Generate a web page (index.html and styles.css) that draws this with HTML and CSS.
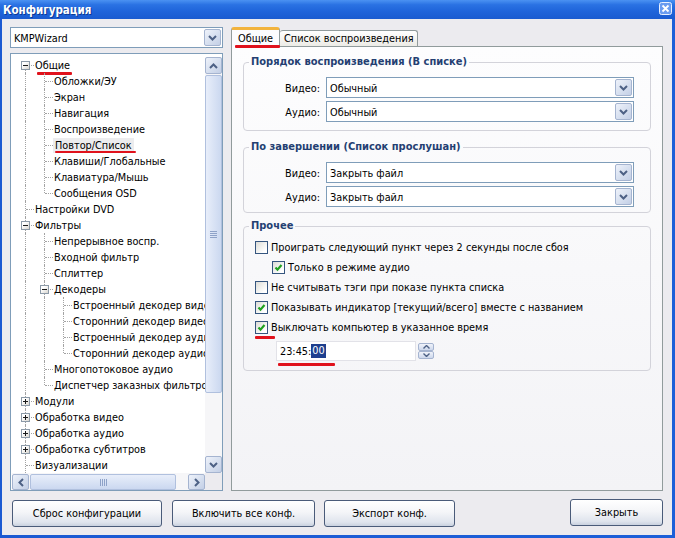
FILE: index.html
```html
<!DOCTYPE html>
<html lang="ru">
<head>
<meta charset="utf-8">
<title>Конфигурация</title>
<link rel="stylesheet" href="styles.css">
</head>
<body>
<div class="window">
  <div class="titlebar">
    <span class="title">Конфигурация</span>
    <span class="close"><svg width="13" height="13" viewBox="0 0 13 13"><rect x="0.5" y="0.5" width="12" height="12" rx="2" fill="#6a9cf0" stroke="#e8f0ff"/><path d="M3.5 3.5l6 6M9.5 3.5l-6 6" stroke="#fff" stroke-width="1.8"/></svg></span>
  </div>
  <div class="client">
    <div class="main">
      <div class="left">
        <div class="combo">
          <span class="val">KMPWizard</span>
          <span class="drop"><svg width="9" height="6" viewBox="0 0 9 6"><path d="M1 1l3.5 3.5L8 1" fill="none" stroke="#4d6185" stroke-width="2"/></svg></span>
        </div>
        <div class="tree">
          <div class="tree-body">
            <div class="row"><i class="cell c f"><b class="exp"></b></i><span class="t mark m-root">Общие</span></div>
            <div class="row"><i class="cell g"></i><i class="cell c"></i><span class="t">Обложки/ЭУ</span></div>
            <div class="row"><i class="cell g"></i><i class="cell c"></i><span class="t">Экран</span></div>
            <div class="row"><i class="cell g"></i><i class="cell c"></i><span class="t">Навигация</span></div>
            <div class="row"><i class="cell g"></i><i class="cell c"></i><span class="t">Воспроизведение</span></div>
            <div class="row"><i class="cell g"></i><i class="cell c"></i><span class="t sel mark m-sel">Повтор/Список</span></div>
            <div class="row"><i class="cell g"></i><i class="cell c"></i><span class="t">Клавиши/Глобальные</span></div>
            <div class="row"><i class="cell g"></i><i class="cell c"></i><span class="t">Клавиатура/Мышь</span></div>
            <div class="row"><i class="cell g"></i><i class="cell c l"></i><span class="t">Сообщения OSD</span></div>
            <div class="row"><i class="cell c"></i><span class="t">Настройки DVD</span></div>
            <div class="row"><i class="cell c"><b class="exp"></b></i><span class="t">Фильтры</span></div>
            <div class="row"><i class="cell g"></i><i class="cell c"></i><span class="t">Непрерывное воспр.</span></div>
            <div class="row"><i class="cell g"></i><i class="cell c"></i><span class="t">Входной фильтр</span></div>
            <div class="row"><i class="cell g"></i><i class="cell c"></i><span class="t">Сплиттер</span></div>
            <div class="row"><i class="cell g"></i><i class="cell c"><b class="exp"></b></i><span class="t">Декодеры</span></div>
            <div class="row"><i class="cell g"></i><i class="cell g"></i><i class="cell c"></i><span class="t">Встроенный декодер видео</span></div>
            <div class="row"><i class="cell g"></i><i class="cell g"></i><i class="cell c"></i><span class="t">Сторонний декодер видео</span></div>
            <div class="row"><i class="cell g"></i><i class="cell g"></i><i class="cell c"></i><span class="t">Встроенный декодер аудио</span></div>
            <div class="row"><i class="cell g"></i><i class="cell g"></i><i class="cell c l"></i><span class="t">Сторонний декодер аудио</span></div>
            <div class="row"><i class="cell g"></i><i class="cell c"></i><span class="t">Многопотоковое аудио</span></div>
            <div class="row"><i class="cell g"></i><i class="cell c l"></i><span class="t">Диспетчер заказных фильтров</span></div>
            <div class="row"><i class="cell c"><b class="exp plus"></b></i><span class="t">Модули</span></div>
            <div class="row"><i class="cell c"><b class="exp plus"></b></i><span class="t">Обработка видео</span></div>
            <div class="row"><i class="cell c"><b class="exp plus"></b></i><span class="t">Обработка аудио</span></div>
            <div class="row"><i class="cell c"><b class="exp plus"></b></i><span class="t">Обработка субтитров</span></div>
            <div class="row"><i class="cell c"></i><span class="t">Визуализации</span></div>
          </div>
          <div class="vscroll">
            <span class="sbtn"><svg width="9" height="6" viewBox="0 0 9 6"><path d="M1 5l3.5-3.5L8 5" fill="none" stroke="#4d6185" stroke-width="2"/></svg></span>
            <span class="vthumb"><span class="grip-h"></span></span>
            <span class="vtrack"></span>
            <span class="sbtn"><svg width="9" height="6" viewBox="0 0 9 6"><path d="M1 1l3.5 3.5L8 1" fill="none" stroke="#4d6185" stroke-width="2"/></svg></span>
          </div>
          <div class="hscroll">
            <span class="sbtn"><svg width="6" height="9" viewBox="0 0 6 9"><path d="M5 1L1.5 4.5 5 8" fill="none" stroke="#4d6185" stroke-width="2"/></svg></span>
            <span class="hthumb"><span class="grip-v"></span></span>
            <span class="htrack"></span>
            <span class="sbtn"><svg width="6" height="9" viewBox="0 0 6 9"><path d="M1 1l3.5 3.5L1 8" fill="none" stroke="#4d6185" stroke-width="2"/></svg></span>
          </div>
          <div class="corner"></div>
        </div>
      </div>
      <div class="right">
        <div class="tabs">
          <span class="tab active"><span class="mark m-tab">Общие</span></span>
          <span class="tab">Список воспроизведения</span>
        </div>
        <div class="page">
          <fieldset class="grp g1">
            <legend>Порядок воспроизведения (В списке)</legend>
            <div class="frow"><span class="lbl">Видео:</span>
              <div class="combo wide"><span class="val">Обычный</span><span class="drop"><svg width="9" height="6" viewBox="0 0 9 6"><path d="M1 1l3.5 3.5L8 1" fill="none" stroke="#4d6185" stroke-width="2"/></svg></span></div>
            </div>
            <div class="frow"><span class="lbl">Аудио:</span>
              <div class="combo wide"><span class="val">Обычный</span><span class="drop"><svg width="9" height="6" viewBox="0 0 9 6"><path d="M1 1l3.5 3.5L8 1" fill="none" stroke="#4d6185" stroke-width="2"/></svg></span></div>
            </div>
          </fieldset>
          <fieldset class="grp g2">
            <legend>По завершении (Список прослушан)</legend>
            <div class="frow"><span class="lbl">Видео:</span>
              <div class="combo wide"><span class="val">Закрыть файл</span><span class="drop"><svg width="9" height="6" viewBox="0 0 9 6"><path d="M1 1l3.5 3.5L8 1" fill="none" stroke="#4d6185" stroke-width="2"/></svg></span></div>
            </div>
            <div class="frow"><span class="lbl">Аудио:</span>
              <div class="combo wide"><span class="val">Закрыть файл</span><span class="drop"><svg width="9" height="6" viewBox="0 0 9 6"><path d="M1 1l3.5 3.5L8 1" fill="none" stroke="#4d6185" stroke-width="2"/></svg></span></div>
            </div>
          </fieldset>
          <fieldset class="grp g3">
            <legend>Прочее</legend>
            <div class="opts">
              <div class="chk"><span class="box"></span><span>Проиграть следующий пункт через 2 секунды после сбоя</span></div>
              <div class="chk sub"><span class="box on"><svg width="11" height="11" viewBox="0 0 11 11"><path d="M2.5 5.5l2 2.2 4-4.7" fill="none" stroke="#21a121" stroke-width="2.2"/></svg></span><span>Только в режиме аудио</span></div>
              <div class="chk"><span class="box"></span><span>Не считывать тэги при показе пункта списка</span></div>
              <div class="chk"><span class="box on"><svg width="11" height="11" viewBox="0 0 11 11"><path d="M2.5 5.5l2 2.2 4-4.7" fill="none" stroke="#21a121" stroke-width="2.2"/></svg></span><span>Показывать индикатор [текущий/всего] вместе с названием</span></div>
              <div class="chk"><span class="box on mark m-box"><svg width="11" height="11" viewBox="0 0 11 11"><path d="M2.5 5.5l2 2.2 4-4.7" fill="none" stroke="#21a121" stroke-width="2.2"/></svg></span><span>Выключать компьютер в указанное время</span></div>
              <div class="timerow">
                <div class="time mark m-time"><span>23:45:</span><span class="hl">00</span></div>
                <div class="spin">
                  <span class="sp"><svg width="7" height="4" viewBox="0 0 7 4"><path d="M0.5 3.5l3-3 3 3" fill="none" stroke="#4d6185" stroke-width="1.4"/></svg></span>
                  <span class="sp"><svg width="7" height="4" viewBox="0 0 7 4"><path d="M0.5 0.5l3 3 3-3" fill="none" stroke="#4d6185" stroke-width="1.4"/></svg></span>
                </div>
              </div>
            </div>
          </fieldset>
        </div>
      </div>
    </div>
    <div class="buttons">
      <span class="btn b1">Сброс конфигурации</span>
      <span class="btn b2">Включить все конф.</span>
      <span class="btn b3">Экспорт конф.</span>
      <span class="btn b4">Закрыть</span>
    </div>
  </div>
</div>
</body>
</html>
```

FILE: styles.css
```css
* { box-sizing: border-box; }
html, body { margin: 0; padding: 0; }
body {
  width: 675px;
  height: 538px;
  overflow: hidden;
  font-family: "DejaVu Sans Condensed", "DejaVu Sans", Verdana, sans-serif;
  font-size: 10.8px;
  color: #000;
  background: #1a58cf;
}
.window {
  width: 675px;
  height: 538px;
  display: flex;
  flex-direction: column;
  background: linear-gradient(90deg, #1b59d2, #1d5fd8);
}
.titlebar {
  height: 19px;
  flex: none;
  display: flex;
  align-items: center;
  justify-content: space-between;
  padding: 0 3px 0 3px;
  background: linear-gradient(#4b92f2 0%, #2a72e3 25%, #1f64da 60%, #1a5bd0 100%);
}
.title {
  color: #fff;
  font-family: "DejaVu Sans Condensed", "DejaVu Sans", sans-serif;
  font-weight: bold;
  font-size: 11.5px;
  text-shadow: 1px 1px 0 #0c3a94;
}
.close { display: flex; margin-top: -2px; }
.client {
  flex: 1;
  margin: 0 3px 3px 2px;
  background: #ecebef;
  display: flex;
  flex-direction: column;
  gap: 8px;
  padding: 8px 9px 8px 8px;
}
.main { flex: 1; display: flex; gap: 8px; min-height: 0; }
.left { width: 213px; flex: none; display: flex; flex-direction: column; gap: 5px; }
.right { flex: 1; display: flex; flex-direction: column; }

/* combo box */
.combo {
  height: 21px;
  flex: none;
  display: flex;
  align-items: center;
  border: 1px solid #7f9db9;
  background: #fff;
  padding: 1px;
}
.combo .val { flex: 1; padding-left: 2px; padding-top: 1px; white-space: nowrap; }
.drop, .sbtn {
  width: 17px;
  height: 17px;
  flex: none;
  display: flex;
  align-items: center;
  justify-content: center;
  border: 1px solid #a5b4d0;
  border-radius: 2px;
  background: linear-gradient(135deg, #eef2fa 0%, #d6dfef 55%, #c3cfe6 100%);
}

/* tree */
.tree {
  flex: 1;
  border: 1px solid #7f9db9;
  background: #fff;
  padding: 3px 0 0 1px;
  display: grid;
  grid-template-columns: 1fr 17px;
  grid-template-rows: 1fr 17px;
  min-height: 0;
}
.tree-body { overflow: hidden; background: #fff; min-height: 0; }
.row {
  height: 16px;
  display: flex;
  align-items: flex-start;
  padding-left: 4px;
  white-space: nowrap;
  line-height: 16px;
}
.cell { width: 19px; height: 16px; flex: none; position: relative; display: block; }
.cell.g::before, .cell.c::before {
  content: "";
  position: absolute;
  left: 9px;
  top: 0;
  bottom: 0;
  border-left: 1px dotted #a3a3a3;
}
.cell.c::after {
  content: "";
  position: absolute;
  left: 10px;
  right: 1px;
  top: 8px;
  border-top: 1px dotted #a3a3a3;
}
.cell.l::before { bottom: 8px; }
.cell.f::before { top: 8px; }
.exp {
  position: absolute;
  left: 5px;
  top: 4px;
  width: 9px;
  height: 9px;
  border: 1px solid #8c9aa8;
  background: linear-gradient(135deg, #ffffff 30%, #d9d6cf);
  z-index: 1;
}
.exp::before {
  content: "";
  position: absolute;
  left: 1px;
  top: 3px;
  width: 5px;
  height: 1px;
  background: #1a1a1a;
}
.exp.plus::after {
  content: "";
  position: absolute;
  left: 3px;
  top: 1px;
  width: 1px;
  height: 5px;
  background: #1a1a1a;
}
.t { display: block; margin-top: 1px; line-height: 15px; }
.sel { background: #ececee; padding: 0 2px; margin-left: -1px; }

/* scrollbars */
.vscroll {
  display: flex;
  flex-direction: column;
  gap: 1px;
  background: #f6f6f8;
}
.vthumb {
  height: 318px;
  flex: none;
  border: 1px solid #b0c0de;
  border-radius: 2px;
  background: linear-gradient(90deg, #e8eefa, #cbd8f0);
  display: flex;
  align-items: center;
  justify-content: center;
}
.vtrack, .htrack { flex: 1; }
.grip-h {
  width: 7px;
  height: 7px;
  background: repeating-linear-gradient(#8ea2c8 0 1px, transparent 1px 2px);
}
.hscroll {
  display: flex;
  gap: 1px;
  padding-top: 1px;
  background: #f6f6f8;
}
.hthumb {
  width: 146px;
  flex: none;
  border: 1px solid #b0c0de;
  border-radius: 2px;
  background: linear-gradient(#e8eefa, #cbd8f0);
  display: flex;
  align-items: center;
  justify-content: center;
}
.grip-v {
  width: 7px;
  height: 7px;
  background: repeating-linear-gradient(90deg, #8ea2c8 0 1px, transparent 1px 2px);
}
.hscroll .sbtn { height: 16px; }
.corner { background: #ecebef; }

/* tabs */
.tabs { height: 19px; flex: none; display: flex; align-items: flex-end; }
.tab {
  height: 16px;
  padding: 0 3px 0 4px;
  display: flex;
  align-items: center;
  border: 1px solid #919b9c;
  border-bottom: none;
  border-left: none;
  border-radius: 3px 3px 0 0;
  background: linear-gradient(#ffffff, #ecebe6);
  white-space: nowrap;
}
.tab.active {
  height: 20px;
  margin-bottom: -1px;
  width: 49px;
  padding-left: 6px;
  border-left: 1px solid #919b9c;
  border-top: 3px solid #f2b33d;
  background: #fcfcfe;
  position: relative;
  z-index: 1;
  padding-bottom: 1px;
}
.page {
  flex: 1;
  border: 1px solid #919b9c;
  background: linear-gradient(#fdfdfe, #f3f3f6);
  padding: 8px 11px 0 11px;
  display: flex;
  flex-direction: column;
}

/* group boxes */
.grp {
  margin: 0;
  border: 1px solid #d3d3da;
  border-radius: 4px;
  padding: 8px 16px 8px 5px;
  min-width: 0;
}
.grp legend {
  padding: 0 2px;
  font-weight: bold;
  font-size: 11px;
  line-height: 14px;
  color: #243f72;
}
.g2 { margin-top: 9px; padding-bottom: 5px; }
.g3 { margin-top: 6px; padding-top: 4px; padding-bottom: 9px; }
.frow { display: flex; align-items: center; gap: 6px; }
.frow + .frow { margin-top: 3px; }
.lbl { width: 71px; text-align: right; flex: none; padding-top: 1px; }
.combo.wide { flex: 1; }

/* checkboxes */
.opts { padding-left: 6px; }
.chk { height: 20px; display: flex; align-items: center; gap: 3px; white-space: nowrap; }
.chk > span:last-child { padding-top: 1px; }
.chk.sub { padding-left: 17px; }
.box {
  width: 13px;
  height: 13px;
  flex: none;
  border: 1px solid #35557f;
  background: linear-gradient(135deg, #dcdcd6, #ffffff 80%);
  display: flex;
  align-items: center;
  justify-content: center;
}
.timerow { display: flex; align-items: center; gap: 2px; margin-top: 4px; padding-left: 21px; }
.time {
  width: 140px;
  height: 20px;
  display: flex;
  align-items: center;
  padding-left: 3px;
  background: #fff;
  border: 1px solid #e2e2e8;
}
.hl { background: #1e3f8e; color: #fff; padding: 0 1px; line-height: 14px; }
.spin { width: 16px; height: 16px; display: flex; flex-direction: column; }
.sp {
  flex: 1;
  display: flex;
  align-items: center;
  justify-content: center;
  border: 1px solid #a5b4d0;
  border-radius: 2px;
  background: linear-gradient(#f0f3fa, #cdd8ec);
}

/* annotation underlines */
.mark { position: relative; }
.mark::after {
  content: "";
  position: absolute;
  height: 3px;
  background: #e0121c;
  border-radius: 1px;
}
.m-root::after { left: 2px; width: 35px; top: 14px; }
.m-sel::after { left: 2px; width: 81px; top: 12.5px; height: 2.5px; }
.m-tab::after { left: -3px; width: 45px; top: 13px; }
.m-box::after { left: -1px; width: 20px; top: 14px; }
.m-time::after { left: 1px; width: 57px; top: 21px; }

/* buttons */
.buttons { height: 28px; flex: none; display: flex; padding-left: 2px; }
.btn {
  height: 27px;
  display: flex;
  align-items: center;
  justify-content: center;
  border: 1px solid #4a5b79;
  border-radius: 3px;
  background: linear-gradient(#ffffff 0%, #f4f5f8 45%, #dfe4ed 85%, #c9d1df 100%);
  white-space: nowrap;
}
.b1 { width: 150px; align-self: flex-end; }
.b2 { width: 143px; margin-left: 10px; align-self: flex-end; }
.b3 { width: 131px; margin-left: 9px; align-self: flex-end; }
.b4 { width: 93px; margin-left: auto; align-self: flex-start; }
```
